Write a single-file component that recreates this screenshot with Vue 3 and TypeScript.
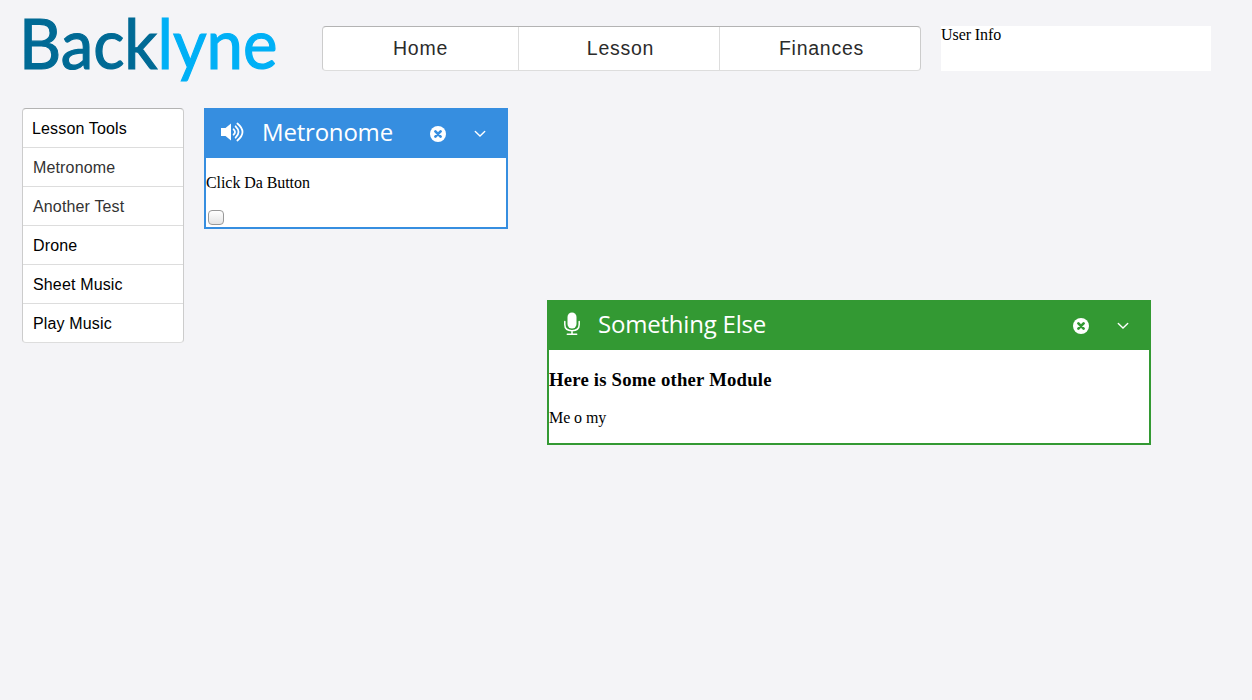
<script setup lang="ts">
import { ref } from 'vue'

interface Tool {
  label: string
  muted?: boolean
}

const pages: string[] = ['Home', 'Lesson', 'Finances']
const tools: Tool[] = [
  { label: 'Metronome', muted: true },
  { label: 'Another Test', muted: true },
  { label: 'Drone' },
  { label: 'Sheet Music' },
  { label: 'Play Music' },
]
const ticking = ref(false)
</script>

<template>
  <div class="page">
    <header class="top">
      <svg class="logo" width="290" height="108" role="img" aria-label="Backlyne">
        <text x="19" y="68.500" textLength="258.500" lengthAdjust="spacingAndGlyphs"><tspan class="logo-dark">Back</tspan><tspan class="logo-light">lyne</tspan></text>
      </svg>
      <nav class="nav">
        <a v-for="page in pages" :key="page" class="nav-item"><span>{{ page }}</span></a>
      </nav>
      <div class="user">User Info</div>
    </header>

    <main class="main">
      <ul class="tools">
        <li class="tool tool-title"><span>Lesson Tools</span></li>
        <li v-for="tool in tools" :key="tool.label" class="tool" :class="{ muted: tool.muted }">
          <span>{{ tool.label }}</span>
        </li>
      </ul>

      <div class="workspace">
        <section class="module metronome">
          <div class="module-head">
            <svg class="icon-speaker" width="24" height="20" viewBox="0 0 24 20">
              <path d="M0 6H4.500L10 1.500V18.500L4.500 14H0Z" fill="#fff" />
              <g fill="none" stroke="#fff" stroke-width="1.800" stroke-linecap="round">
                <path d="M12.600 7.300Q15.300 10 12.600 12.700" />
                <path d="M14.600 4.300Q20.400 10 14.600 15.700" />
                <path d="M16.400 1.500Q26.600 10 16.400 18.500" />
              </g>
            </svg>
            <h2 class="title">Metronome</h2>
            <svg class="icon-close" width="16" height="16" viewBox="0 0 16 16">
              <circle cx="8" cy="8" r="8" fill="#fff" />
              <path d="M5.400 5.400L10.600 10.600M10.600 5.400L5.400 10.600" fill="none" stroke="#368ee0" stroke-width="2.700" stroke-linecap="round" />
            </svg>
            <svg class="icon-chevron" width="12" height="8" viewBox="0 0 12 8">
              <path d="M1.300 1.500L6 6L10.700 1.500" fill="none" stroke="#fff" stroke-width="1.400" stroke-linecap="round" />
            </svg>
          </div>
          <div class="module-body">
            <p class="click-text"><span>Click Da Button</span></p>
            <input v-model="ticking" class="check" type="checkbox" />
          </div>
        </section>

        <section class="module other">
          <div class="module-head">
            <svg class="icon-mic" width="16" height="24" viewBox="0 0 16 24">
              <rect x="3.500" y="0.500" width="9" height="16" rx="4.500" fill="#fff" />
              <path d="M0.800 9.500V12.500Q0.800 18.700 8 18.700T15.200 12.500V9.500M8 18.700V22M3.300 22.200H12.700" fill="none" stroke="#fff" stroke-width="1.500" stroke-linecap="round" />
            </svg>
            <h2 class="title">Something Else</h2>
            <svg class="icon-close" width="16" height="16" viewBox="0 0 16 16">
              <circle cx="8" cy="8" r="8" fill="#fff" />
              <path d="M5.400 5.400L10.600 10.600M10.600 5.400L5.400 10.600" fill="none" stroke="#339933" stroke-width="2.700" stroke-linecap="round" />
            </svg>
            <svg class="icon-chevron" width="12" height="8" viewBox="0 0 12 8">
              <path d="M1.300 1.500L6 6L10.700 1.500" fill="none" stroke="#fff" stroke-width="1.400" stroke-linecap="round" />
            </svg>
          </div>
          <div class="module-body">
            <h3>Here is Some other Module</h3>
            <p>Me o my</p>
          </div>
        </section>
      </div>
    </main>
  </div>
</template>

<style>
html,
body {
  margin: 0;
  background: #f4f4f7;
}
</style>

<style scoped>
.page {
  box-sizing: border-box;
  width: 1252px;
  height: 700px;
  overflow: hidden;
  background: #f4f4f7;
  color: #000;
  font: 16px/18px 'Liberation Serif', serif;
  letter-spacing: -0.07px;
}

.top {
  display: flex;
  height: 108px;
}

.logo {
  flex: none;
  overflow: visible;
}

.logo text {
  font: 69px Lato, sans-serif;
  letter-spacing: 0;
  stroke-width: 1.2px;
}

.logo-dark {
  fill: #006a95;
  stroke: #006a95;
}

.logo-light {
  fill: #00b0f6;
  stroke: #00b0f6;
}

.nav {
  box-sizing: border-box;
  display: grid;
  grid-template-columns: 195px 201px 1fr;
  width: 599px;
  height: 45px;
  margin: 26px 0 0 32px;
  border: 1px solid #ccc;
  border-top-color: #b3b3b3;
  border-bottom-color: #ddd;
  border-radius: 4px;
  background: #fff;
}

.nav-item {
  color: #2b2b2b;
  font: 19.500px/43px 'Liberation Sans', sans-serif;
  letter-spacing: 0.75px;
  text-align: center;
}

.nav-item + .nav-item {
  padding-left: 3px;
  border-left: 1px solid #ddd;
}

.user {
  width: 270px;
  height: 45px;
  margin: 26px 0 0 20px;
  background: #fff;
}

.main {
  display: flex;
}

.tools {
  box-sizing: border-box;
  width: 162px;
  height: 235px;
  margin: 0 20px 0 22px;
  padding: 0;
  border: 1px solid #ccc;
  border-top-color: #b3b3b3;
  border-bottom-color: #ddd;
  border-radius: 4px;
  background: #fff;
  list-style: none;
}

.tool {
  box-sizing: border-box;
  height: 39px;
  padding-left: 10px;
  border-bottom: 1px solid #ddd;
  font: 16px/39px 'Liberation Sans', sans-serif;
  letter-spacing: 0.15px;
}

.tool-title {
  padding-left: 9px;
}

.tool:last-child {
  border-bottom: 0;
}

.muted {
  color: #333;
}

.workspace {
  position: relative;
  flex: 1;
  height: 592px;
}

.module {
  position: absolute;
  box-sizing: border-box;
  border: 2px solid;
  background: #fff;
}

.metronome {
  left: 0;
  top: 0;
  width: 304px;
  height: 121px;
  border-color: #368ee0;
}

.metronome .module-head {
  background: #368ee0;
}

.other {
  left: 343px;
  top: 192px;
  width: 604px;
  height: 145px;
  border-color: #393;
}

.other .module-head {
  background: #393;
}

.module-head {
  display: flex;
  align-items: center;
  box-sizing: border-box;
  height: 48px;
  padding-right: 20px;
}

.icon-speaker {
  margin: -4px 17px 0 15px;
}

.icon-mic {
  margin: -4px 18px 0 15px;
}

.title {
  flex: 1;
  margin: -4px 0 0;
  color: #fff;
  font: 400 24px/46px 'Open Sans', sans-serif;
  letter-spacing: -0.2px;
  white-space: nowrap;
}

.icon-close {
  margin: 0 28px 0 0;
}

.icon-chevron {
  margin-top: 0;
}

.module-body p {
  margin: 16px 0;
}

.module-body h3 {
  margin: 19px 0 18px;
  font-size: 18.720px;
  line-height: 22px;
  letter-spacing: 0.21px;
}

.check {
  display: block;
  appearance: none;
  box-sizing: border-box;
  width: 16px;
  height: 15px;
  margin: 18px 0 0 2px;
  border: 1px solid #999;
  border-radius: 4px;
  background: linear-gradient(#fff, #e4e4e4);
}

.check:checked {
  background: #bbb;
}
</style>
